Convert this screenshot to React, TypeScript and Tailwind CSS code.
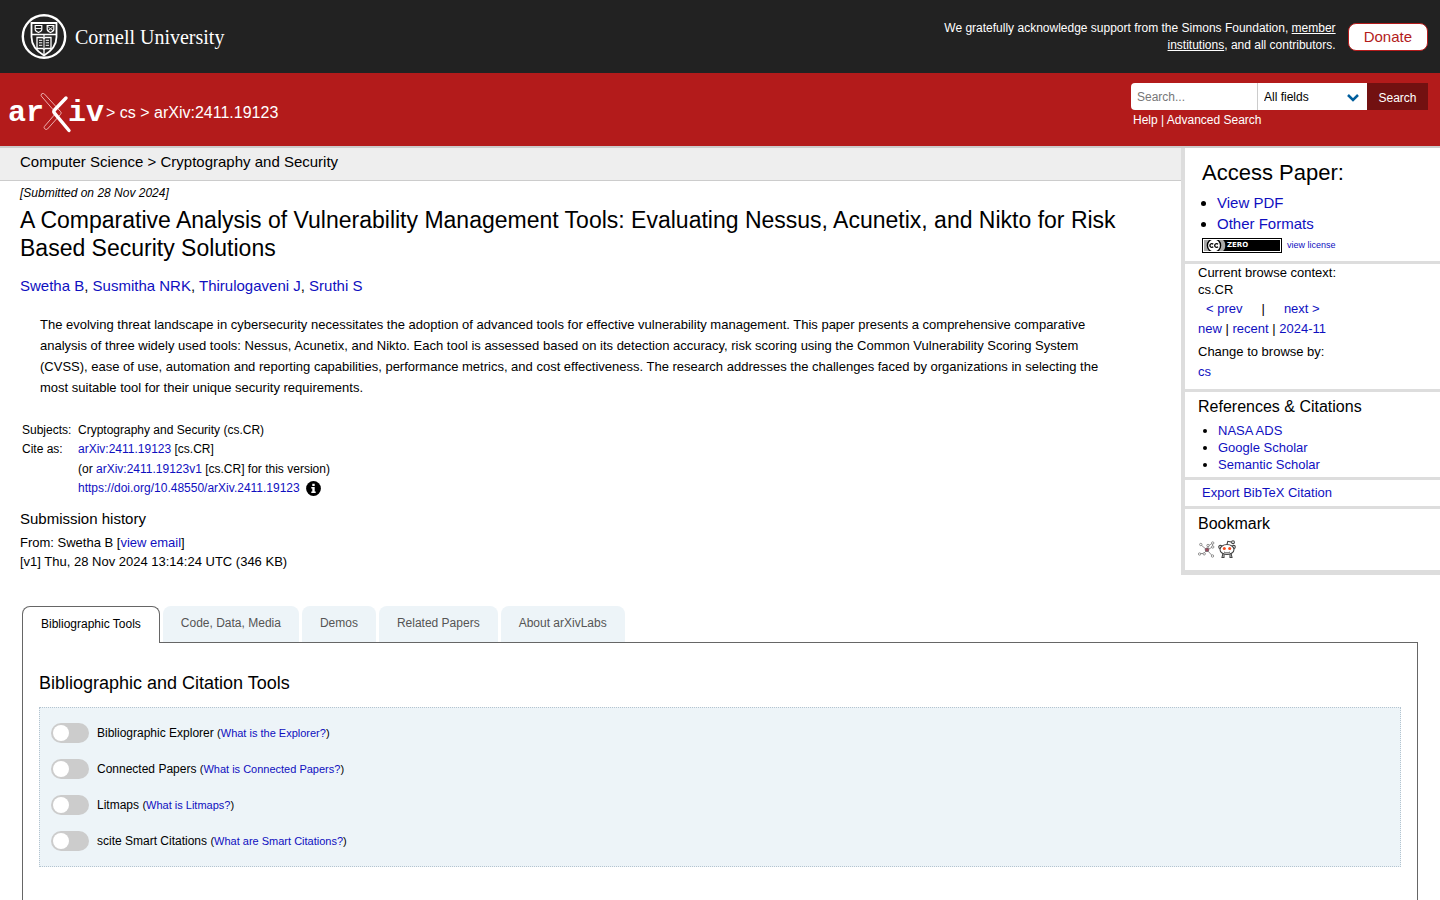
import React from 'react';

const link = 'text-[#0f0fbf] hover:underline';

const tabs = ['Bibliographic Tools', 'Code, Data, Media', 'Demos', 'Related Papers', 'About arXivLabs'];

const tools = [
  { id: 'explorer', name: 'Bibliographic Explorer', help: 'What is the Explorer?' },
  { id: 'connected', name: 'Connected Papers', help: 'What is Connected Papers?' },
  { id: 'litmaps', name: 'Litmaps', help: 'What is Litmaps?' },
  { id: 'scite', name: 'scite Smart Citations', help: 'What are Smart Citations?' },
];

const CornellSeal: React.FC = () => (
  <svg viewBox="0 0 46 46" className="h-[46px] w-[46px]" fill="none" stroke="#fff" aria-hidden="true">
    <circle cx="23" cy="22.500" r="21.200" strokeWidth="2.400" />
    <path d="M10.500 9h25v14c0 8.500-5 14-12.500 18.500C15.500 37 10.500 31.500 10.500 23z" strokeWidth="1.800" />
    <path d="M10.500 20.500h25M23 20.500V41" strokeWidth="1.300" />
    <path d="M14.200 11.500h6.600v4c0 1.600-1.600 2.400-3.300 3-1.700-.6-3.300-1.400-3.300-3zM26.200 11.500h6.600v4c0 1.600-1.600 2.400-3.300 3-1.700-.6-3.300-1.400-3.300-3z" strokeWidth="1.200" />
    <path d="M14.500 14.500h6M26.500 12l3 3 3-3M27 16.500l2.500-1.500 2.500 1.500" strokeWidth=".9" />
    <path d="M16 23.500h5.500l1.500 1 1.500-1H30v11h-5.500l-1.500 1-1.500-1H16z" fill="#222" strokeWidth="1.300" />
    <path d="M23 24.500V35M18 26.300h3.300M18 28.800h3.300M18 31.300h3.300M24.700 26.300H28M24.700 28.800H28M24.700 31.300H28" />
  </svg>
);

const ArxivLogo: React.FC = () => (
  <a href="#" aria-label="arXiv" className="flex h-10 items-center font-['Liberation_Mono',monospace] text-[30px] font-bold leading-9 text-white">
    <span>ar</span>
    <svg viewBox="0 0 32 40" className="-mx-1 h-10 w-8" fill="none" strokeLinecap="round" aria-hidden="true">
      <path d="M2 .8c1.200-.9 2.200-.2 3.200 1L20.500 18.500c1 1 .8 2-.2 3.200L7.500 36c-1 .9-2.500.4-3.200-.8-.4-.8-.2-1.500.5-2.200L16 20 1.400 3.200C.8 2.300 1 1.500 2 .8z" stroke="#f3c0c0" strokeWidth=".9" />
      <path d="M26 5L14.500 17c-1 1.200-1 2 0 3.200L29 37.500" stroke="#fff" strokeWidth="3.400" />
    </svg>
    <span>iv</span>
  </a>
);

const BibSonomyIcon: React.FC = () => (
  <svg viewBox="0 0 17 17" className="h-[17px] w-[17px]" fill="#fff" stroke="#777" strokeWidth=".8" aria-hidden="true">
    <path d="M2.500 3.500L9 9l5.500 6M9 9L5.500 12.500h-4M9 9l2-4.500L14.500 2v4L9 9" />
    <circle cx="2.800" cy="3.500" r="1.200" />
    <circle cx="10" cy="4.500" r="1.200" />
    <circle cx="14.700" cy="2" r="1.200" />
    <circle cx="14.700" cy="6" r="1.200" />
    <circle cx="1.600" cy="13" r="1.200" />
    <circle cx="6.200" cy="12.800" r="1.200" />
    <circle cx="14.500" cy="15" r="1.200" />
    <circle cx="9" cy="8.800" r="1.800" fill="#a0475a" stroke="#6a5560" />
  </svg>
);

const RedditIcon: React.FC = () => (
  <svg viewBox="0 0 18 18" className="h-[18px] w-[18px]" fill="#fff" stroke="#444" strokeWidth="1.100" aria-hidden="true">
    <path d="M5 13l-1 4.500h2.500M13 13l1 4.500h-2.500M6 14.500v3M12 14.500v3" />
    <circle cx="2.300" cy="7" r="1.600" />
    <circle cx="15.700" cy="7" r="1.600" />
    <ellipse cx="9" cy="9.500" rx="7" ry="5" />
    <path d="M9 4.500l.8-3.200 4 .8" fill="none" />
    <circle cx="15" cy="2.200" r="1.400" />
    <circle cx="6.300" cy="8.500" r="1.500" fill="#f54a1c" stroke="none" />
    <circle cx="11.700" cy="8.500" r="1.500" fill="#f54a1c" stroke="none" />
    <path d="M6 12c1.800 1.200 4.200 1.200 6 0" fill="none" strokeWidth=".9" />
  </svg>
);

const LicenseBadge: React.FC = () => (
  <span className="flex h-[15px] w-20 items-center border border-black bg-black outline-1 -outline-offset-2 outline-white">
    <svg viewBox="0 0 22 11" className="ml-px h-[11px] w-[22px]" aria-hidden="true">
      <path d="M0 0h19c3 2 3 9 0 11H0z" fill="#aaa" />
      <circle cx="10" cy="5.500" r="6.600" fill="#fff" stroke="#000" strokeWidth="1.400" />
      <path d="M9.200 4.200a1.900 1.900 0 1 0 0 2.600M14 4.200a1.900 1.900 0 1 0 0 2.600" fill="none" stroke="#000" strokeWidth="1.300" />
    </svg>
    <span className="ml-px font-['DejaVu_Sans',sans-serif] text-[7px] font-bold leading-none text-white">ZERO</span>
  </span>
);

const Header: React.FC = () => (
  <header>
    <div className="flex h-[73px] items-center justify-between bg-[#222] pl-[21px] pr-3 text-white">
      <a href="#" className="flex items-center gap-2">
        <CornellSeal />
        <span className="font-['Liberation_Serif',serif] text-[20px] leading-6">Cornell University</span>
      </a>
      <div className="flex items-center gap-3">
        <p className="max-w-[400px] text-right text-[12px] leading-[17px]">
          We gratefully acknowledge support from the Simons Foundation, <a href="#" className="underline">member institutions</a>, and all contributors.
        </p>
        <a href="#" className="rounded-lg border border-[#b31b1b] bg-white px-[15px] py-px text-[15px] leading-6 text-[#b31b1b]">
          Donate
        </a>
      </div>
    </div>
    <div className="flex h-[75px] items-start justify-between border-b-2 border-[#ccc] bg-[#b31b1b] pl-2 pr-3 text-white">
      <div className="flex items-center gap-0.5 pt-5">
        <ArxivLogo />
        <span className="text-[16px] leading-6">
          &gt; <a href="#">cs</a> &gt; arXiv:2411.19123
        </span>
      </div>
      <form className="pt-2.5" onSubmit={(e) => e.preventDefault()}>
        <div className="flex h-[27px]">
          <input
            type="text"
            aria-label="Search term or terms"
            placeholder="Search..."
            className="w-[127px] rounded-l-sm border-r border-[#ccc] bg-white px-1.5 text-[12px] text-black placeholder:text-[#777]"
          />
          <div className="relative">
            <select
              aria-label="Field to search"
              className="h-full w-[109px] appearance-none bg-white pl-1.5 text-[12px] text-black"
            >
              <option>All fields</option>
              <option>Title</option>
              <option>Author</option>
              <option>Abstract</option>
            </select>
            <svg viewBox="0 0 12 8" className="pointer-events-none absolute right-2 top-[11px] h-2 w-3" fill="none" stroke="#005e9d" strokeWidth="2.500" aria-hidden="true">
              <path d="M1 1l5 5 5-5" />
            </svg>
          </div>
          <button type="submit" className="w-[61px] bg-[#721111] pt-0.5 text-[12px] text-white">
            Search
          </button>
        </div>
        <p className="pl-0.5 pt-0.5 text-[12px] leading-4">
          <a href="#">Help</a> | <a href="#">Advanced Search</a>
        </p>
      </form>
    </div>
  </header>
);

const Article: React.FC = () => (
  <main className="min-w-0 flex-1">
    <div className="border-b border-[#ccc] bg-[#eee] px-5 pb-1.5 pt-0.5 text-[15px] leading-6">
      Computer Science &gt; Cryptography and Security
    </div>
    <div className="px-5 pt-1">
      <p className="text-[12px] italic leading-4">[Submitted on 28 Nov 2024]</p>
      <h1 className="pt-[5px] text-[23px] leading-7">
        A Comparative Analysis of Vulnerability Management Tools: Evaluating Nessus, Acunetix, and Nikto for Risk Based Security Solutions
      </h1>
      <p className="pt-3 text-[15px] leading-6">
        <a href="#" className={link}>Swetha B</a>, <a href="#" className={link}>Susmitha NRK</a>, <a href="#" className={link}>Thirulogaveni J</a>, <a href="#" className={link}>Sruthi S</a>
      </p>
      <blockquote className="pl-5 pr-12 pt-4 text-[13px] leading-[21px]">
        The evolving threat landscape in cybersecurity necessitates the adoption of advanced tools for effective vulnerability management. This paper presents a comprehensive comparative analysis of three widely used tools: Nessus, Acunetix, and Nikto. Each tool is assessed based on its detection accuracy, risk scoring using the Common Vulnerability Scoring System (CVSS), ease of use, automation and reporting capabilities, performance metrics, and cost effectiveness. The research addresses the challenges faced by organizations in selecting the most suitable tool for their unique security requirements.
      </blockquote>
      <table className="ml-0.5 mt-[23px] text-[12px] leading-[19px]">
        <tbody>
          <tr>
            <td className="w-14">Subjects:</td>
            <td>Cryptography and Security (cs.CR)</td>
          </tr>
          <tr>
            <td>Cite as:</td>
            <td><a href="#" className={link}>arXiv:2411.19123</a> [cs.CR]</td>
          </tr>
          <tr>
            <td />
            <td className="pt-px">(or <a href="#" className={link}>arXiv:2411.19123v1</a> [cs.CR] for this version)</td>
          </tr>
          <tr>
            <td />
            <td>
              <span className="flex items-center gap-1.5">
                <a href="#" className={link}>https://doi.org/10.48550/arXiv.2411.19123</a>
                <svg viewBox="0 0 15 15" className="h-[15px] w-[15px]" aria-hidden="true">
                  <circle cx="7.500" cy="7.500" r="7.400" />
                  <path d="M6.300 2.800h2.400v2.200H6.300zM5.300 6h3.400v4.400h1v1.500H5.300v-1.500h1V7.500h-1z" fill="#fff" />
                </svg>
              </span>
            </td>
          </tr>
        </tbody>
      </table>
      <h2 className="pt-[9px] text-[15px] leading-6">Submission history</h2>
      <p className="pt-0.5 text-[13px] leading-[19px]">
        From: Swetha B [<a href="#" className={link}>view email</a>]
        <br />
        [v1] Thu, 28 Nov 2024 13:14:24 UTC (346 KB)
      </p>
    </div>
  </main>
);

const Sidebar: React.FC = () => (
  <aside className="w-[259px] shrink-0 self-start border-b-[5px] border-l-4 border-[#ddd] text-[13px]">
    <section className="border-b-[3px] border-[#ddd] pb-2 pl-[17px] pt-2.5">
      <h2 className="text-[22px] leading-[30px]">Access Paper:</h2>
      <ul className="list-disc pl-[15px] pt-1 text-[15px] leading-[21px]">
        <li><a href="#" className={link}>View PDF</a></li>
        <li><a href="#" className={link}>Other Formats</a></li>
      </ul>
      <div className="flex items-center gap-[5px] pt-[3px]">
        <LicenseBadge />
        <a href="#" className={`${link} text-[9px] leading-4`}>view license</a>
      </div>
    </section>
    <section className="border-b-[3px] border-[#ddd] pb-[7px] pl-[13px]">
      <p className="leading-[17px]">
        Current browse context:
        <br />
        cs.CR
      </p>
      <p className="flex pl-2 leading-[21px]">
        <a href="#" className={link}>&lt; prev</a>
        <span className="px-[19px]">|</span>
        <a href="#" className={link}>next &gt;</a>
      </p>
      <p className="leading-[19px]">
        <a href="#" className={link}>new</a> | <a href="#" className={link}>recent</a> | <a href="#" className={link}>2024-11</a>
      </p>
      <p className="pt-1 leading-5">
        Change to browse by:
        <br />
        <a href="#" className={link}>cs</a>
      </p>
    </section>
    <section className="border-b-[3px] border-[#ddd] pb-1 pl-[13px] pt-1">
      <h2 className="text-[16px] leading-[22px]">References &amp; Citations</h2>
      <ul className="list-disc pl-5 pt-1 leading-[17px]">
        <li><a href="#" className={link}>NASA ADS</a></li>
        <li><a href="#" className={link}>Google Scholar</a></li>
        <li><a href="#" className={link}>Semantic Scholar</a></li>
      </ul>
    </section>
    <section className="border-b-[3px] border-[#ddd] py-[3px] pl-[17px] leading-5">
      <button type="button" className={link}>Export BibTeX Citation</button>
    </section>
    <section className="pb-3 pl-[13px] pt-1">
      <h2 className="text-[16px] leading-[22px]">Bookmark</h2>
      <div className="flex items-center gap-[3px] pt-[5px]">
        <a href="#" aria-label="BibSonomy"><BibSonomyIcon /></a>
        <a href="#" aria-label="Reddit"><RedditIcon /></a>
      </div>
    </section>
  </aside>
);

const Labs: React.FC = () => (
  <div className="flex flex-1 flex-col px-[22px] pt-[31px]">
    <div className="relative z-10 -mb-px flex items-start gap-[3px]" role="tablist">
      {tabs.map((tab, i) => (
        <button
          key={tab}
          type="button"
          role="tab"
          aria-selected={i === 0}
          className={
            i === 0
              ? 'h-[37px] rounded-t-lg border border-b-0 border-[#666] bg-white px-[18px] pb-0.5 text-[12px]'
              : 'h-9 rounded-t-lg bg-[#edf4f8] px-[18px] pb-0.5 text-[12px] text-[#555]'
          }
        >
          {tab}
        </button>
      ))}
    </div>
    <div className="flex-1 border border-b-0 border-[#666] px-4 pt-7">
      <h2 className="text-[18px] leading-6">Bibliographic and Citation Tools</h2>
      <div className="mt-3 flex flex-col gap-4 border border-dotted border-[#b4c4d0] bg-[#edf4f8] px-[11px] py-[15px]">
        {tools.map((tool) => (
          <div key={tool.id} className="flex h-5 items-center gap-2">
            <input
              type="checkbox"
              id={tool.id}
              className="flex h-5 w-[38px] appearance-none items-center rounded-full bg-[#ccc] px-0.5 before:h-4 before:w-4 before:rounded-full before:bg-white checked:justify-end checked:bg-[#2f7d32]"
            />
            <p className="text-[12px] leading-5">
              <label htmlFor={tool.id}>{tool.name}</label>{' '}
              <span className="text-[11px]">(<a href="#" className={link}>{tool.help}</a>)</span>
            </p>
          </div>
        ))}
      </div>
    </div>
  </div>
);

const App: React.FC = () => (
  <div className="flex min-h-screen flex-col bg-white font-['Liberation_Sans',Arial,sans-serif] text-black">
    <Header />
    <div className="flex">
      <Article />
      <Sidebar />
    </div>
    <Labs />
  </div>
);

export default App;
